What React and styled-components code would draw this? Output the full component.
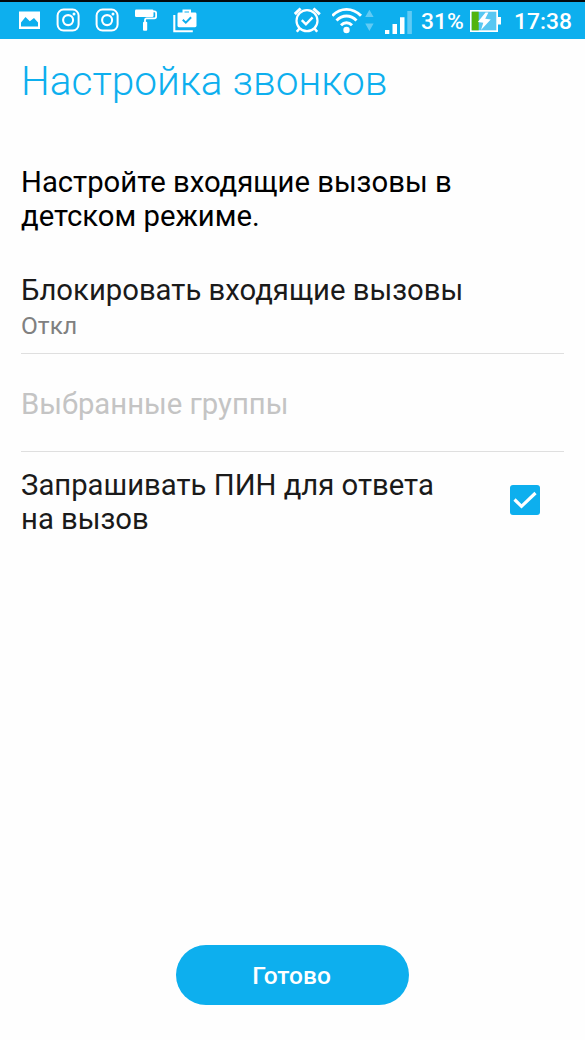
import styled, { createGlobalStyle } from "styled-components";

const GlobalStyle = createGlobalStyle`
  * {
    box-sizing: border-box;
  }

  body {
    margin: 0;
    background: #fefefe;
    font-family: Roboto, "Noto Sans", sans-serif;
  }
`;

const Screen = styled.div`
  display: flex;
  flex-direction: column;
  width: 585px;
  height: 1040px;
  overflow: hidden;
  background: #fefefe;
`;

const StatusBar = styled.header`
  display: flex;
  justify-content: space-between;
  height: 39px;
  padding: 0 13px 0 18px;
  border-top: 2px solid #04080a;
  background: #0dafee;
  color: #fff;
`;

const StatusGroup = styled.div`
  display: flex;
  align-items: center;
  gap: ${({ $gap }) => $gap || 0}px;
`;

const StatusIcon = styled.svg`
  display: block;
  flex: none;
  width: ${({ $width }) => $width}px;
  height: 37px;
  fill: #fff;
`;

const StatusText = styled.span`
  width: ${({ $width }) => $width}px;
  padding-top: 2px;
  font-size: 22.8px;
  font-weight: 500;
  line-height: 37px;
  white-space: nowrap;
`;

const StatusReadings = styled.div`
  display: flex;
  align-items: center;
  margin-left: 8px;

  svg {
    margin: 0 13px 0 6px;
  }
`;

const Content = styled.main`
  flex: 1;
  padding: 18px 21px 0;
`;

const Title = styled.h1`
  margin: 0;
  color: #0dafee;
  font-size: 40.6px;
  font-weight: 300;
  line-height: 48px;
  white-space: nowrap;
`;

const Description = styled.p`
  width: 470px;
  margin: 60px 0 40px;
  color: #000;
  font-size: 29.27px;
  line-height: 34px;
`;

const Row = styled.div`
  display: flex;
  align-items: flex-start;
  justify-content: space-between;
  height: ${({ $height }) => $height}px;
  padding-top: ${({ $top }) => $top || 0}px;
  border-bottom: ${({ $last }) => ($last ? "none" : "1px solid #dfdfdf")};
`;

const RowLabel = styled.div`
  max-width: ${({ $wrap }) => ($wrap ? "430px" : "none")};
  color: ${({ $disabled }) => ($disabled ? "#c4c4c4" : "#1a1a1a")};
  font-size: 29.27px;
  line-height: 34px;
`;

const RowValue = styled.div`
  margin-top: 4px;
  color: #808080;
  font-size: 24.5px;
  line-height: 30px;
`;

const Checkbox = styled.span`
  display: flex;
  flex: none;
  width: 30px;
  height: 30px;
  margin: 17px 24px 0 0;
  border-radius: 3px;
  background: #0dafee;
`;

const Footer = styled.footer`
  display: flex;
  justify-content: center;
  padding-bottom: 35px;
`;

const DoneButton = styled.button`
  width: 233px;
  height: 60px;
  padding: 0 2px 0 0;
  border: 0;
  border-radius: 30px;
  background: #0dafee;
  color: #fff;
  font-family: inherit;
  font-size: 24.5px;
  font-weight: 500;
`;

const PictureIcon = () => (
  <StatusIcon $width={23} viewBox="0 0 23 37">
    <path
      fillRule="evenodd"
      d="M1 9.5h21v17.5H1zM3 20.5v4h17v-4l-4-4.5-4.2 3.2L7.5 15z"
    />
  </StatusIcon>
);

const InstagramIcon = () => (
  <StatusIcon $width={24} viewBox="0 0 24 37">
    <rect x="1.6" y="7.6" width="21" height="21" rx="6" fill="none" stroke="#fff" strokeWidth="2" />
    <circle cx="12.1" cy="18.1" r="5" fill="none" stroke="#fff" strokeWidth="2.1" />
    <circle cx="18" cy="12" r="1.5" />
  </StatusIcon>
);

const PaintRollerIcon = () => (
  <StatusIcon $width={23} viewBox="-1 0 23 37">
    <rect x="0" y="7.5" width="18.5" height="7.5" rx="1.2" />
    <path
      d="M18 9.3h1.5q1.6 0 1.6 1.6v3.6q0 1.8-1.8 1.8h-7.7q-1.6 0-1.6 1.6v2.4"
      fill="none"
      stroke="#fff"
      strokeWidth="1.8"
    />
    <rect x="8" y="19.8" width="4.2" height="9" rx="1" />
  </StatusIcon>
);

const TaskBagIcon = () => (
  <StatusIcon $width={25} viewBox="-1 0 25 37">
    <path d="M1.3 13v16.2h18.5" fill="none" stroke="#fff" strokeWidth="2.1" />
    <path d="M10.5 11V8.6h6.5v2.4" fill="none" stroke="#fff" strokeWidth="2" />
    <rect x="4.5" y="10.5" width="19" height="14.7" rx="1.4" />
    <path d="M9.8 17.7l3 2.9 5.3-5.4" fill="none" stroke="#0dafee" strokeWidth="2" />
  </StatusIcon>
);

const AlarmIcon = () => (
  <StatusIcon $width={28} viewBox="1 0 28 37">
    <g fill="none" stroke="#fff">
      <circle cx="14" cy="18.7" r="10.5" strokeWidth="2.2" />
      <path d="M1.8 12.1L7.6 6.5M26.8 12.3L20.4 6.5" strokeWidth="3" />
      <path d="M6.7 26.2L3.8 29.8M21.3 26.2l2.9 3.6" strokeWidth="2.5" />
      <path d="M8.8 18.2l4.1 4.1 6.7-7" strokeWidth="2.5" />
    </g>
  </StatusIcon>
);

const WifiIcon = () => (
  <StatusIcon $width={43} viewBox="1 0 43 37">
    <g fill="none" stroke="#fff" strokeWidth="2.9">
      <path d="M1.3 13.8Q7.5 7.4 15.5 7.4T30 13.8" />
      <path d="M5.5 18.5Q10 14 15.5 14T25.5 18.5" />
      <path d="M10 23.2Q12.4 20.7 15.5 20.7T21 23.2" />
    </g>
    <circle cx="15.5" cy="28" r="3.2" />
    <path d="M34.2 15l4.2-7.2 4.2 7.2zM34.2 21.5h8.4L38.4 29z" opacity=".35" />
  </StatusIcon>
);

const SignalIcon = () => (
  <StatusIcon $width={28} viewBox="0 0 28 37">
    <path d="M0 28h4.3v4H0zM7.5 22h4.5v10H7.5zM15 15.3h4.5v16.7H15z" />
    <path d="M22.3 9h4.6v23h-4.6z" opacity=".35" />
  </StatusIcon>
);

const BatteryIcon = () => (
  <StatusIcon $width={31} viewBox="0 0 31 37">
    <path d="M0 8h28v7h3v7.5h-3V30H0z" />
    <rect x="1.7" y="9.7" width="24.6" height="18.6" fill="#58c7f2" />
    <rect x="1.7" y="9.7" width="7" height="18.6" fill="#52b30e" />
    <path d="M15.5 10.5L7.8 20l5.5.8-2.3 7.2 9.7-10.4-5.5-.8 3.2-6.3z" />
  </StatusIcon>
);

const CheckIcon = () => (
  <svg width="30" height="30" viewBox="0 0 30 30">
    <path d="M4.5 14.5l7 6.8L25.5 8" fill="none" stroke="#fff" strokeWidth="3.2" />
  </svg>
);

export default function App() {
  return (
    <>
      <GlobalStyle />
      <Screen>
        <StatusBar>
          <StatusGroup $gap={15}>
            <PictureIcon />
            <InstagramIcon />
            <InstagramIcon />
            <PaintRollerIcon />
            <TaskBagIcon />
          </StatusGroup>
          <StatusGroup>
            <StatusGroup $gap={10}>
              <AlarmIcon />
              <WifiIcon />
              <SignalIcon />
            </StatusGroup>
            <StatusReadings>
              <StatusText $width={43}>31%</StatusText>
              <BatteryIcon />
              <StatusText $width={58}>17:38</StatusText>
            </StatusReadings>
          </StatusGroup>
        </StatusBar>
        <Content>
          <Title>Настройка звонков</Title>
          <Description>Настройте входящие вызовы в детском режиме.</Description>
          <Row $height={81}>
            <div>
              <RowLabel>Блокировать входящие вызовы</RowLabel>
              <RowValue>Откл</RowValue>
            </div>
          </Row>
          <Row $height={98} $top={33}>
            <RowLabel $disabled>Выбранные группы</RowLabel>
          </Row>
          <Row $height={84} $top={16} $last>
            <RowLabel $wrap>Запрашивать ПИН для ответа на вызов</RowLabel>
            <Checkbox>
              <CheckIcon />
            </Checkbox>
          </Row>
        </Content>
        <Footer>
          <DoneButton>Готово</DoneButton>
        </Footer>
      </Screen>
    </>
  );
}
